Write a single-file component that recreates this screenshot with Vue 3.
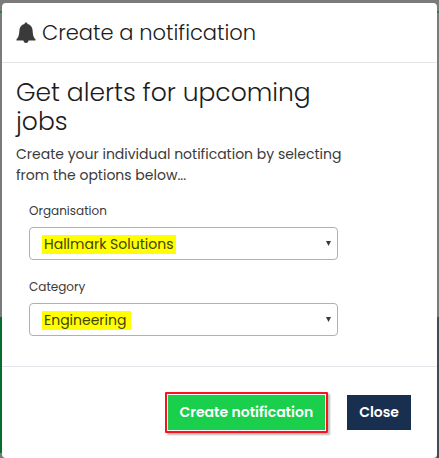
<script setup>
import { ref } from 'vue'

const organisation = ref('Hallmark Solutions')
const category = ref('Engineering')
</script>

<template>
  <div class="page">
    <section class="modal" role="dialog" aria-modal="true" aria-labelledby="modal-title">
      <header class="modal-header">
        <svg class="bell" viewBox="0 0 20 22" aria-hidden="true">
          <path d="M10 0.5C10.9 0.5 11.5 1.1 11.5 2C14.6 2.7 16.4 5 16.6 8.2C16.9 12.9 17.4 15.3 19.5 17.2V18.6H0.5V17.2C2.6 15.3 3.1 12.9 3.4 8.2C3.6 5 5.4 2.7 8.5 2C8.5 1.1 9.1 0.5 10 0.5ZM7.3 18H12.7C12.5 19.9 11.5 21 10 21C8.5 21 7.5 19.9 7.3 18Z" />
        </svg>
        <h1 id="modal-title">Create a notification</h1>
      </header>

      <div class="modal-body">
        <h2>Get alerts for upcoming jobs</h2>
        <p>Create your individual notification by selecting from the options below...</p>
        <form id="alert-form" class="fields" @submit.prevent>
          <div class="field">
            <label for="organisation">Organisation</label>
            <div class="select-box">
              <select id="organisation" v-model="organisation" class="mark-long">
                <option>Hallmark Solutions</option>
              </select>
              <svg class="arrow" viewBox="0 0 5 5" aria-hidden="true"><path d="M0 0H5L2.5 5Z" /></svg>
            </div>
          </div>
          <div class="field">
            <label for="category">Category</label>
            <div class="select-box">
              <select id="category" v-model="category" class="mark-short">
                <option>Engineering</option>
              </select>
              <svg class="arrow" viewBox="0 0 5 5" aria-hidden="true"><path d="M0 0H5L2.5 5Z" /></svg>
            </div>
          </div>
        </form>
      </div>

      <footer class="modal-footer">
        <div class="highlight">
          <button type="submit" form="alert-form" class="btn create">Create notification</button>
        </div>
        <button type="button" class="btn close">Close</button>
      </footer>
    </section>
  </div>
</template>

<style>
body {
  margin: 0;
}
</style>

<style scoped>
.page {
  box-sizing: border-box;
  min-height: 100vh;
  padding: 3px 2px 0;
  display: flex;
  background:
    linear-gradient(#04702a, #04702a) 0 317px / 2px 136px no-repeat,
    linear-gradient(#444b55, #444b55) 100% 317px / 2px 100% no-repeat,
    linear-gradient(#138a3a, #138a3a) 0 11px / 100% 2px no-repeat,
    #7b7b7b;
  font-family: Poppins, Inter, sans-serif;
  color: #3a3a3a;
}

.modal {
  flex: 1;
  display: flex;
  flex-direction: column;
  background: #fff;
  border-radius: 4px;
}

.modal-header {
  display: flex;
  align-items: center;
  gap: 6px;
  height: 59px;
  padding: 0 14px;
  border-bottom: 1px solid #e5e5e5;
}

.bell {
  width: 20px;
  height: 22px;
  fill: #3a3a3a;
}

h1,
h2,
p {
  margin: 0;
}

h1,
h2 {
  font-weight: 300;
  color: #1c1c1c;
}

h1 {
  font-size: 21px;
  line-height: 30px;
}

.modal-body {
  padding: 15px 84px 30px 14px;
  border-bottom: 1px solid #e3e7ec;
}

h2 {
  font-size: 25px;
  line-height: 29px;
}

p {
  margin-top: 8px;
  font-size: 14px;
  line-height: 21px;
}

.fields {
  display: flex;
  flex-direction: column;
  gap: 17px;
  padding: 0 15px 0 13px;
  margin-top: 15px;
}

.field {
  display: flex;
  flex-direction: column;
}

label {
  font-size: 12px;
  line-height: 20px;
  padding-bottom: 6px;
}

.select-box {
  position: relative;
  display: flex;
}

select {
  appearance: none;
  flex: 1;
  min-width: 0;
  height: 33px;
  padding: 0 24px 0 14px;
  border: 1px solid #b0b0b0;
  border-radius: 4px;
  background: #fff linear-gradient(#ff0, #ff0) 12px 7px no-repeat;
  color: #44440a;
  font-family: inherit;
  font-size: 14px;
}

.mark-long {
  background-size: 134px 19px;
}

.mark-short {
  background-size: 89px 19px;
}

.arrow {
  position: absolute;
  top: 14px;
  right: 7px;
  width: 5px;
  height: 5px;
  fill: #333b45;
  pointer-events: none;
}

.modal-footer {
  display: flex;
  justify-content: flex-end;
  align-items: center;
  gap: 19px;
  padding: 25px 26px;
}

.highlight {
  display: flex;
  padding: 1px;
  border: 2px solid #f8141c;
  border-radius: 1px;
  box-shadow: 2px 2px 2px #bbb;
}

.btn {
  height: 35px;
  padding: 0 12px;
  border: 0;
  font-family: inherit;
  font-size: 14px;
  font-weight: 600;
  color: #fff;
}

.create {
  background: #19cf4b;
}

.close {
  background: #182f50;
}
</style>
